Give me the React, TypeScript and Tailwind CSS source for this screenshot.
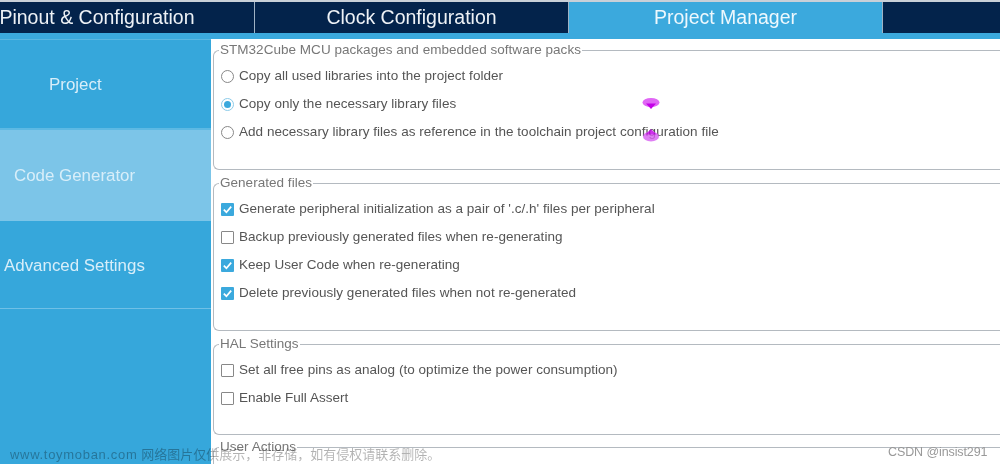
const font = { fontFamily: '"Liberation Sans", "Noto Sans CJK SC", sans-serif' };

function Check({ on }: { on?: boolean }) {
  return on ? (
    <span className="flex h-[13px] w-[13px] items-center justify-center rounded-[1px] bg-[#3ba9dd]">
      <svg viewBox="0 0 13 13" className="h-[13px] w-[13px]"><path d="M2.8 6.6 5.4 9.2 10.2 3.6" fill="none" stroke="#fff" strokeWidth="1.7" /></svg>
    </span>
  ) : (
    <span className="h-[13px] w-[13px] rounded-[1px] border border-[#888] bg-white" />
  );
}

function Radio({ on }: { on?: boolean }) {
  return on ? (
    <span className="flex h-[13px] w-[13px] items-center justify-center rounded-full border border-[#8ccbe9] bg-white">
      <span className="h-[7px] w-[7px] rounded-full bg-[#3ba9dd]" />
    </span>
  ) : (
    <span className="h-[13px] w-[13px] rounded-full border border-[#888] bg-white" />
  );
}

function Row({ icon, label }: { icon: React.ReactNode; label: string }) {
  return (
    <div className="flex h-7 items-center gap-[5px] text-[13.5px] tracking-[0.03px] text-[#555] whitespace-nowrap">
      {icon}
      <span>{label}</span>
    </div>
  );
}

function Group({ title, h, children }: { title: string; h: string; children?: React.ReactNode }) {
  return (
    <fieldset className={`${h} -mr-4 min-w-0 shrink-0 rounded-tl-[6px] rounded-bl-[6px] border border-r-0 border-[#b4bac0] pl-[7px]`}>
      <legend className="-ml-[2px] h-[14px] px-[1px] text-[13.5px] leading-[14px] tracking-[0.03px] text-[#777] whitespace-nowrap">{title}</legend>
      <div className="flex flex-col pt-[5px]">{children}</div>
    </fieldset>
  );
}

function Tab({ label, w, active }: { label: string; w: string; active?: boolean }) {
  return (
    <div className={`${w} flex h-full shrink-0 items-center justify-center border-r border-[#9fb2c4] text-[19.5px] whitespace-nowrap ${active ? 'bg-[#3ba9dd] text-[#eef8fd]' : 'text-[#eef2f6]'}`}>
      {label}
    </div>
  );
}

function Side({ label, cls }: { label: string; cls: string }) {
  return <div className={`flex items-center text-[16.9px] text-[#d8eef9] whitespace-nowrap ${cls}`}>{label}</div>;
}

export default function App() {
  return (
    <div className="relative h-[464px] w-[1000px] overflow-hidden bg-white blur-[0.4px]" style={font}>
      <div className="h-[2px] bg-[#c9d0d8]" />
      <div className="flex h-[31px] bg-[#03234b]">
        <Tab label="Pinout & Configuration" w="w-[255px] pr-[60px]" />
        <Tab label="Clock Configuration" w="w-[314px]" />
        <Tab label="Project Manager" w="w-[314px]" active />
      </div>
      <div className="h-[6px] bg-[#3ba9dd]" />
      <div className="flex h-[425px]">
        <div className="flex w-[211px] shrink-0 flex-col bg-[#36a7db]">
          <Side label="Project" cls="h-[89px] pl-[49px] pt-[1px] border-t border-[#5ab7e2]" />
          <div className="h-[2px] bg-[#5db9e3]" />
          <Side label="Code Generator" cls="h-[91px] pl-[14px] bg-[#7cc5e8]" />
          <Side label="Advanced Settings" cls="h-[88px] pl-[4px] pt-[2px] border-b border-[#6fc0e6]" />
        </div>
        <div className="flex min-w-0 flex-1 flex-col gap-[6px] overflow-hidden pl-[2px] pt-[4px]">
          <Group title="STM32Cube MCU packages and embedded software packs" h="h-[127px]">
            <Row icon={<Radio />} label="Copy all used libraries into the project folder" />
            <Row icon={<Radio on />} label="Copy only the necessary library files" />
            <Row icon={<Radio />} label="Add necessary library files as reference in the toolchain project configuration file" />
          </Group>
          <Group title="Generated files" h="h-[155px]">
            <Row icon={<Check on />} label="Generate peripheral initialization as a pair of '.c/.h' files per peripheral" />
            <Row icon={<Check />} label="Backup previously generated files when re-generating" />
            <Row icon={<Check on />} label="Keep User Code when re-generating" />
            <Row icon={<Check on />} label="Delete previously generated files when not re-generated" />
          </Group>
          <Group title="HAL Settings" h="h-[98px]">
            <Row icon={<Check />} label="Set all free pins as analog (to optimize the power consumption)" />
            <Row icon={<Check />} label="Enable Full Assert" />
          </Group>
          <Group title="User Actions" h="h-[60px] -mt-[1px]" />
        </div>
      </div>

      <svg className="absolute left-[642px] top-[97px] h-[13px] w-[18px]" viewBox="0 0 18 13">
        <ellipse cx="9" cy="5.5" rx="8.5" ry="4.5" fill="#e066f5" />
        <path d="M4 6.5h10L9 12z" fill="#c400e8" />
      </svg>
      <svg className="absolute left-[642px] top-[127px] h-[15px] w-[18px] opacity-80" viewBox="0 0 18 15">
        <ellipse cx="9" cy="9.5" rx="8" ry="5" fill="#d860f2" />
        <path d="M3.5 7.5h11L9 2z" fill="#c400e8" />
      </svg>

      <div className="absolute left-[10px] top-[445px] text-[13px] text-black/30 whitespace-nowrap">
        <span className="tracking-[0.7px]">www.toymoban.com</span> <span>网络图片仅供展示，非存储，如有侵权请联系删除。</span>
      </div>
      <div className="absolute left-[888px] top-[443px] text-[12.5px] tracking-[-0.1px] text-[#999] whitespace-nowrap">CSDN @insist291</div>
    </div>
  );
}
